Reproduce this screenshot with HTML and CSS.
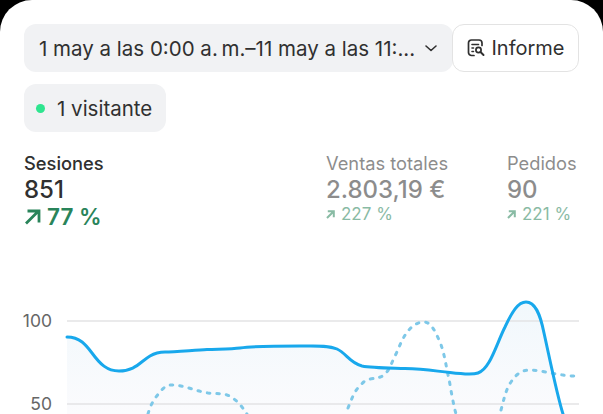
FILE: index.html
```html
<!DOCTYPE html>
<html lang="es">
<head>
    <meta charset="UTF-8">
    <meta name="viewport" content="width=device-width, initial-scale=1.0">
    <title>Resumen</title>
    <link rel="stylesheet" href="styles.css">
</head>
<body>
    <div class="card">
        <div class="toolbar">
            <div class="date-select">
                <span class="date-text">1 may a las 0:00 a.&#8201;m.–11 may a las 11:...</span>
                <svg class="chevron" width="16" height="16" viewBox="0 0 16 16" fill="none">
                    <path d="M3 6 L8 10.500 L13 6" stroke="#303030" stroke-width="1.600" stroke-linecap="round" stroke-linejoin="round"/>
                </svg>
            </div>
            <div class="report-btn">
                <svg width="20" height="20" viewBox="0 0 20 20" fill="none">
                    <path d="M8 17.500 H5.500 A3 3 0 0 1 2.500 14.500 V5 A3 3 0 0 1 5.500 2 H13 A3 3 0 0 1 16 5 V7.500" stroke="#303030" stroke-width="1.700" stroke-linecap="round"/>
                    <path d="M6 6.500 H12.500 M6 10 H7.500 M6 13.500 H7.500" stroke="#303030" stroke-width="1.600" stroke-linecap="round"/>
                    <circle cx="12.500" cy="12" r="2.600" stroke="#303030" stroke-width="1.700"/>
                    <path d="M14.500 14 L17.500 17" stroke="#303030" stroke-width="2" stroke-linecap="round"/>
                </svg>
                <span>Informe</span>
            </div>
        </div>

        <div class="visitors">
            <span class="dot"></span>
            <span>1 visitante</span>
        </div>

        <div class="metrics">
            <div class="metric metric-main">
                <div class="metric-label">Sesiones</div>
                <div class="metric-value">851</div>
                <div class="metric-change">
                    <svg width="17" height="16" viewBox="0 0 17 16" fill="none">
                        <path d="M2 14.500 L14 2.500 M3.500 2 H15 V13.500" stroke="#29845a" stroke-width="2.800"/>
                    </svg>
                    <span>77 %</span>
                </div>
            </div>
            <div class="metric metric-sales">
                <div class="metric-label">Ventas totales</div>
                <div class="metric-value">2.803,19 €</div>
                <div class="metric-change">
                    <svg width="9" height="9" viewBox="0 0 9 9" fill="none">
                        <path d="M1 8 L7.500 1.500 M1.800 1.200 H7.800 V7.200" stroke="#29845a" stroke-width="2"/>
                    </svg>
                    <span>227 %</span>
                </div>
            </div>
            <div class="metric metric-orders">
                <div class="metric-label">Pedidos</div>
                <div class="metric-value">90</div>
                <div class="metric-change">
                    <svg width="9" height="9" viewBox="0 0 9 9" fill="none">
                        <path d="M1 8 L7.500 1.500 M1.800 1.200 H7.800 V7.200" stroke="#29845a" stroke-width="2"/>
                    </svg>
                    <span>221 %</span>
                </div>
            </div>
        </div>

        <!-- chart coordinates are page x, page y minus 295 -->
        <svg class="chart" width="603" height="119" viewBox="0 0 603 119" fill="none">
            <defs>
                <linearGradient id="areaFill" x1="0" y1="0" x2="0" y2="1">
                    <stop offset="0" stop-color="#f1f8fc"/>
                    <stop offset="1" stop-color="#fbfbfd"/>
                </linearGradient>
            </defs>
            <path d="M67 42 C80 42 86 50 92 58 C100 69 107 76 119 76 C135 76 140 67 150 61 C155 58 159 57 165 57 C175 57 195 55 207 54.500 C220 54 232 54 240 53 C255 51 285 51 300 51 C315 51 328 50 337 54 C346 58 350 68 362 71 C372 73 390 73 405 73.500 C425 74 435 76 450 77.500 C462 79 472 80 478 78 C490 74 496 50 505 32 C512 17 518 7 526 7 C535 7 540 18 544 38 C550 65 557 100 563 119 L67 119 Z" fill="url(#areaFill)"/>
            <path class="grid" d="M67 26 H579 M67 109 H579"/>
            <path class="dashed" d="M148 119 C151 108 155 103 160 97 C164 92 167 90 172 90 C184 90 195 96 208 98 C218 99 226 98 231 102 C238 106 243 113 247 119"/>
            <path class="dashed" d="M348 113 C352 103 355 95 360 91 C364 86 366 85 370 84 C376 83 380 83 384 80 C390 75 392 66 396 59 C400 50 403 42 408 36 C413 30 418 27 424 27 C431 27 435 36 440 47 C445 60 446 72 449 84 C451 95 453 108 456 119"/>
            <path class="dashed" d="M501 115 C504 104 506 94 511 87 C516 79 522 75 530 75 C540 75 552 79 563 80 C568 81 574 81 579 81"/>
            <path class="line" d="M67 42 C80 42 86 50 92 58 C100 69 107 76 119 76 C135 76 140 67 150 61 C155 58 159 57 165 57 C175 57 195 55 207 54.500 C220 54 232 54 240 53 C255 51 285 51 300 51 C315 51 328 50 337 54 C346 58 350 68 362 71 C372 73 390 73 405 73.500 C425 74 435 76 450 77.500 C462 79 472 80 478 78 C490 74 496 50 505 32 C512 17 518 7 526 7 C535 7 540 18 544 38 C550 65 557 100 563 119"/>
            <text class="axis" x="52" y="32" text-anchor="end">100</text>
            <text class="axis" x="52" y="115" text-anchor="end">50</text>
        </svg>
    </div>
</body>
</html>
```

FILE: styles.css
```css
html, body {
    margin: 0;
    padding: 0;
}
body {
    width: 603px;
    height: 414px;
    overflow: hidden;
    background-color: #000;
    font-family: Inter, "Noto Sans", sans-serif;
    color: #303030;
}
.card {
    height: 414px;
    box-sizing: border-box;
    padding-top: 24px;
    background-color: #fff;
    border-radius: 32px 32px 0 0;
    overflow: hidden;
}
.toolbar {
    display: flex;
    margin: 0 24px;
    height: 48px;
}
.date-select {
    width: 429px;
    box-sizing: border-box;
    padding: 0 14px 0 15px;
    display: flex;
    align-items: center;
    justify-content: space-between;
    background-color: #f1f2f4;
    border-radius: 12px;
    font-size: 20.500px;
    white-space: nowrap;
}
.report-btn {
    width: 127px;
    margin-left: -1px;
    box-sizing: border-box;
    display: flex;
    align-items: center;
    justify-content: center;
    gap: 5px;
    background-color: #fff;
    border: 1.500px solid #e3e3e3;
    border-radius: 12px;
    font-size: 20px;
}
.visitors {
    display: inline-flex;
    align-items: center;
    gap: 12px;
    height: 48px;
    margin: 12px 0 0 24px;
    padding: 0 14px 0 12px;
    background-color: #f1f2f4;
    border-radius: 12px;
    font-size: 20.500px;
}
.dot {
    width: 9px;
    height: 9px;
    border-radius: 50%;
    background-color: #2ee58f;
}
.metrics {
    display: flex;
    margin: 19px 0 0 24px;
}
.metric-main {
    width: 302px;
}
.metric-sales {
    width: 181px;
}
.metric-sales, .metric-orders {
    opacity: 0.55;
}
.metric-label {
    font-size: 18.300px;
    line-height: 24px;
}
.metric-main .metric-label {
    font-weight: 500;
}
.metric-value {
    font-size: 24px;
    line-height: 30px;
    font-weight: 500;
}
.metric-change {
    display: flex;
    align-items: center;
    gap: 6px;
    font-size: 17px;
    line-height: 18px;
    color: #29845a;
}
.metric-main .metric-change {
    gap: 6px;
    font-size: 22.500px;
    line-height: 24px;
    font-weight: 600;
}
.chart {
    display: block;
    margin-top: 66px;
}
.grid {
    stroke: #e3e3e5;
    stroke-width: 1.500;
}
.line {
    stroke: #18a8ec;
    stroke-width: 3;
    stroke-linecap: round;
}
.dashed {
    stroke: #7ec8e8;
    stroke-width: 3;
    stroke-dasharray: 2.500 7;
    stroke-linecap: round;
}
.axis {
    font-size: 17.500px;
    fill: #666;
    font-family: Inter, "Noto Sans", sans-serif;
}
```
